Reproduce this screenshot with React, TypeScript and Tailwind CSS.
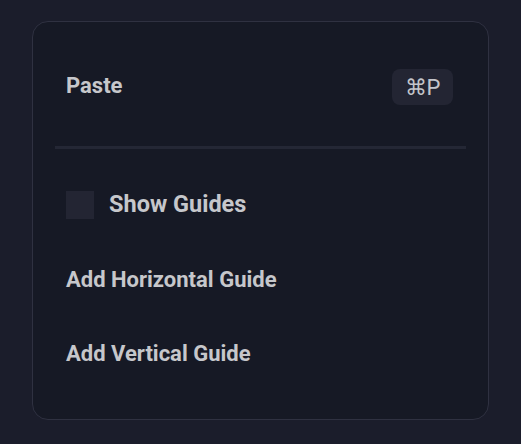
export default function App() {
  const items = [
    { label: 'Show Guides', checkbox: true },
    { label: 'Add Horizontal Guide' },
    { label: 'Add Vertical Guide' },
  ];

  return (
    <div
      className="min-h-screen flex justify-center pt-[21px] bg-[#1b1d2b]"
      style={{ fontFamily: 'Roboto, "Noto Sans", sans-serif' }}
    >
      <div className="w-[457px] h-[399px] rounded-[16px] border border-[#2f3141] bg-[#161925] px-[22px] pt-[28px] pb-[29px]">
        {/* Paste row */}
        <div className="h-[74px] flex items-center justify-between px-[11px]">
          <span className="text-[22px] font-bold text-[#c6c7cb] -mt-[3px]">Paste</span>
          <span className="h-[36px] w-[61px] mr-[2px] rounded-[8px] bg-[#232533] flex items-center justify-center text-[22px] text-[#c4c5cb]">
            ⌘P
          </span>
        </div>

        <div className="mt-[22px] mb-[19px] h-[3px] bg-[#242735]"></div>

        {items.map((item, i) => (
          <div key={i} className="h-[74px] flex items-center px-[11px]">
            {item.checkbox && (
              <span className="w-[28px] h-[28px] bg-[#232533] mr-[15px]"></span>
            )}
            <span
              className={
                item.checkbox
                  ? 'text-[23.5px] font-bold text-[#c6c7cb]'
                  : 'text-[22px] font-bold text-[#c6c7cb]'
              }
            >
              {item.label}
            </span>
          </div>
        ))}
      </div>
    </div>
  );
}
